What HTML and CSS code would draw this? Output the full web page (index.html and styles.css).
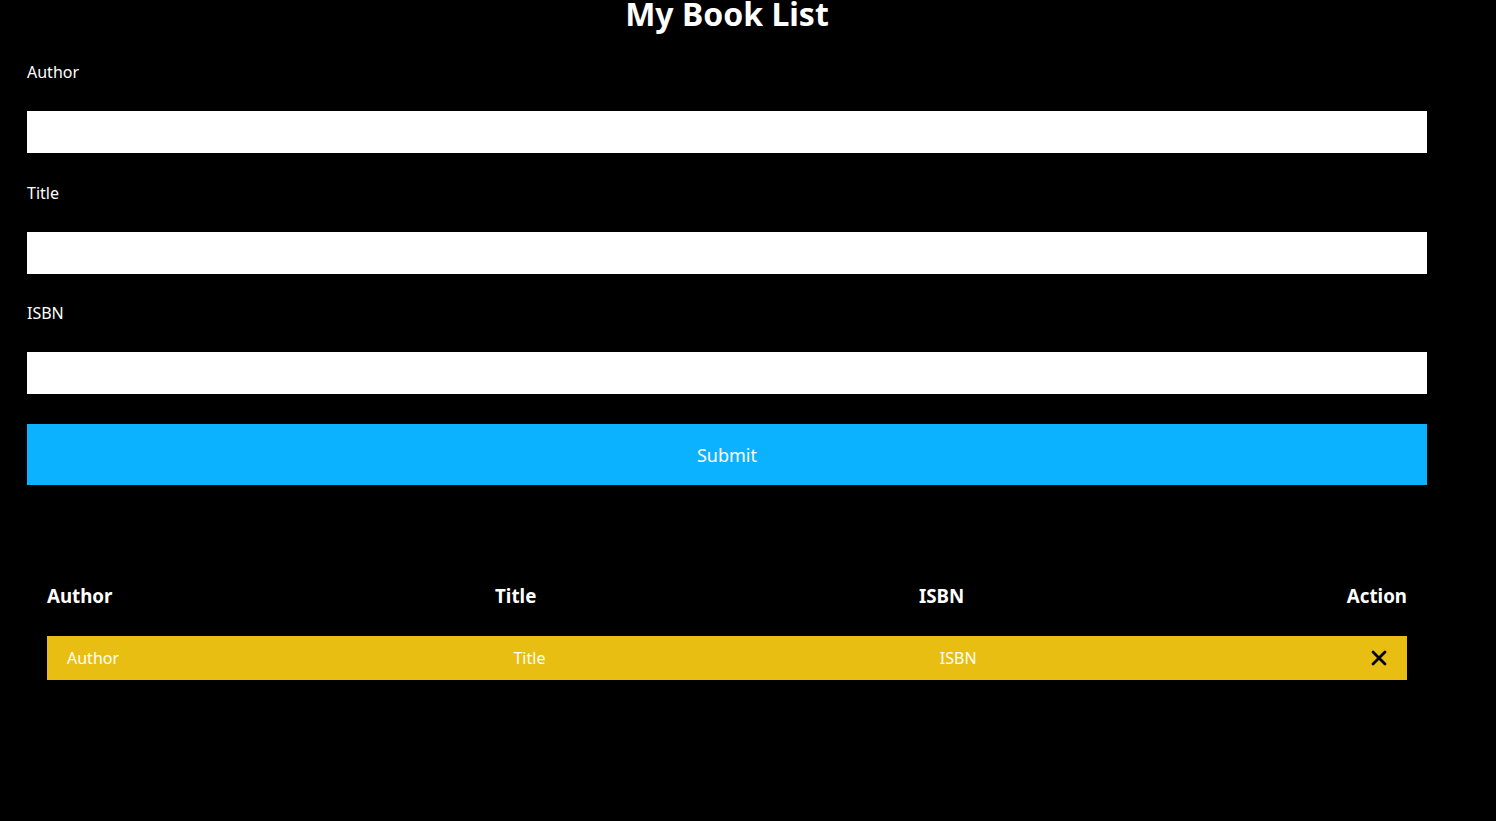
FILE: index.html
```html
<!DOCTYPE html>
<html lang="en">
<head>
<meta charset="utf-8">
<title>My Book List</title>
<link rel="stylesheet" href="styles.css">
</head>
<body>
<div class="container">
  <h1 class="page-title">My Book List</h1>
  <form class="book-form">
    <div class="form-group">
      <label class="form-label" for="author">Author</label>
      <input class="form-input" id="author" type="text">
    </div>
    <div class="form-group">
      <label class="form-label" for="title">Title</label>
      <input class="form-input" id="title" type="text">
    </div>
    <div class="form-group">
      <label class="form-label" for="isbn">ISBN</label>
      <input class="form-input" id="isbn" type="text">
    </div>
    <button class="submit-btn" type="button">Submit</button>
  </form>
  <div class="book-table">
    <div class="table-head">
      <span>Author</span>
      <span>Title</span>
      <span>ISBN</span>
      <span>Action</span>
    </div>
    <div class="table-row">
      <span>Author</span>
      <span>Title</span>
      <span>ISBN</span>
      <span class="delete">
        <svg width="16" height="16" viewBox="0 0 16 16"><path d="M2 2 L14 14 M14 2 L2 14" stroke="#000" stroke-width="2.8" stroke-linecap="round" fill="none"/></svg>
      </span>
    </div>
  </div>
</div>
</body>
</html>
```

FILE: styles.css
```css
html, body {
  margin: 0;
  padding: 0;
  background: #000;
  color: #fff;
  font-family: "Noto Sans", "Open Sans", sans-serif;
}

.container {
  width: 1400px;
  margin-left: 27px;
}

.page-title {
  margin: 0;
  font-size: 32px;
  line-height: 28px;
  font-weight: 700;
  text-align: center;
}

.book-form {
  margin-top: 33px;
  display: flex;
  flex-direction: column;
}

.form-group {
  display: flex;
  flex-direction: column;
  margin-bottom: 28.5px;
}

.form-group:last-of-type {
  margin-bottom: 30px;
}

.form-label {
  font-size: 16px;
  line-height: 22px;
  margin-bottom: 28px;
}

.form-input {
  height: 42px;
  border: none;
  margin: 0;
  padding: 0 10px;
  background: #fff;
  box-sizing: border-box;
  width: 100%;
  font-family: inherit;
  font-size: 16px;
  outline: none;
}

.submit-btn {
  height: 61px;
  width: 100%;
  border: none;
  margin: 0;
  background: #0bb2ff;
  color: #fff;
  font-family: inherit;
  font-size: 18px;
  line-height: 24px;
  padding: 0;
  cursor: pointer;
}

.book-table {
  margin: 99px 20px 0;
}

.table-head {
  display: flex;
  justify-content: space-between;
  font-size: 18.72px;
  font-weight: 700;
  line-height: 24px;
}

.table-row {
  margin-top: 28px;
  height: 44px;
  padding: 0 20px;
  background: #e8be12;
  display: flex;
  justify-content: space-between;
  align-items: center;
  font-size: 16px;
}

.delete {
  display: flex;
  align-items: center;
}
```
